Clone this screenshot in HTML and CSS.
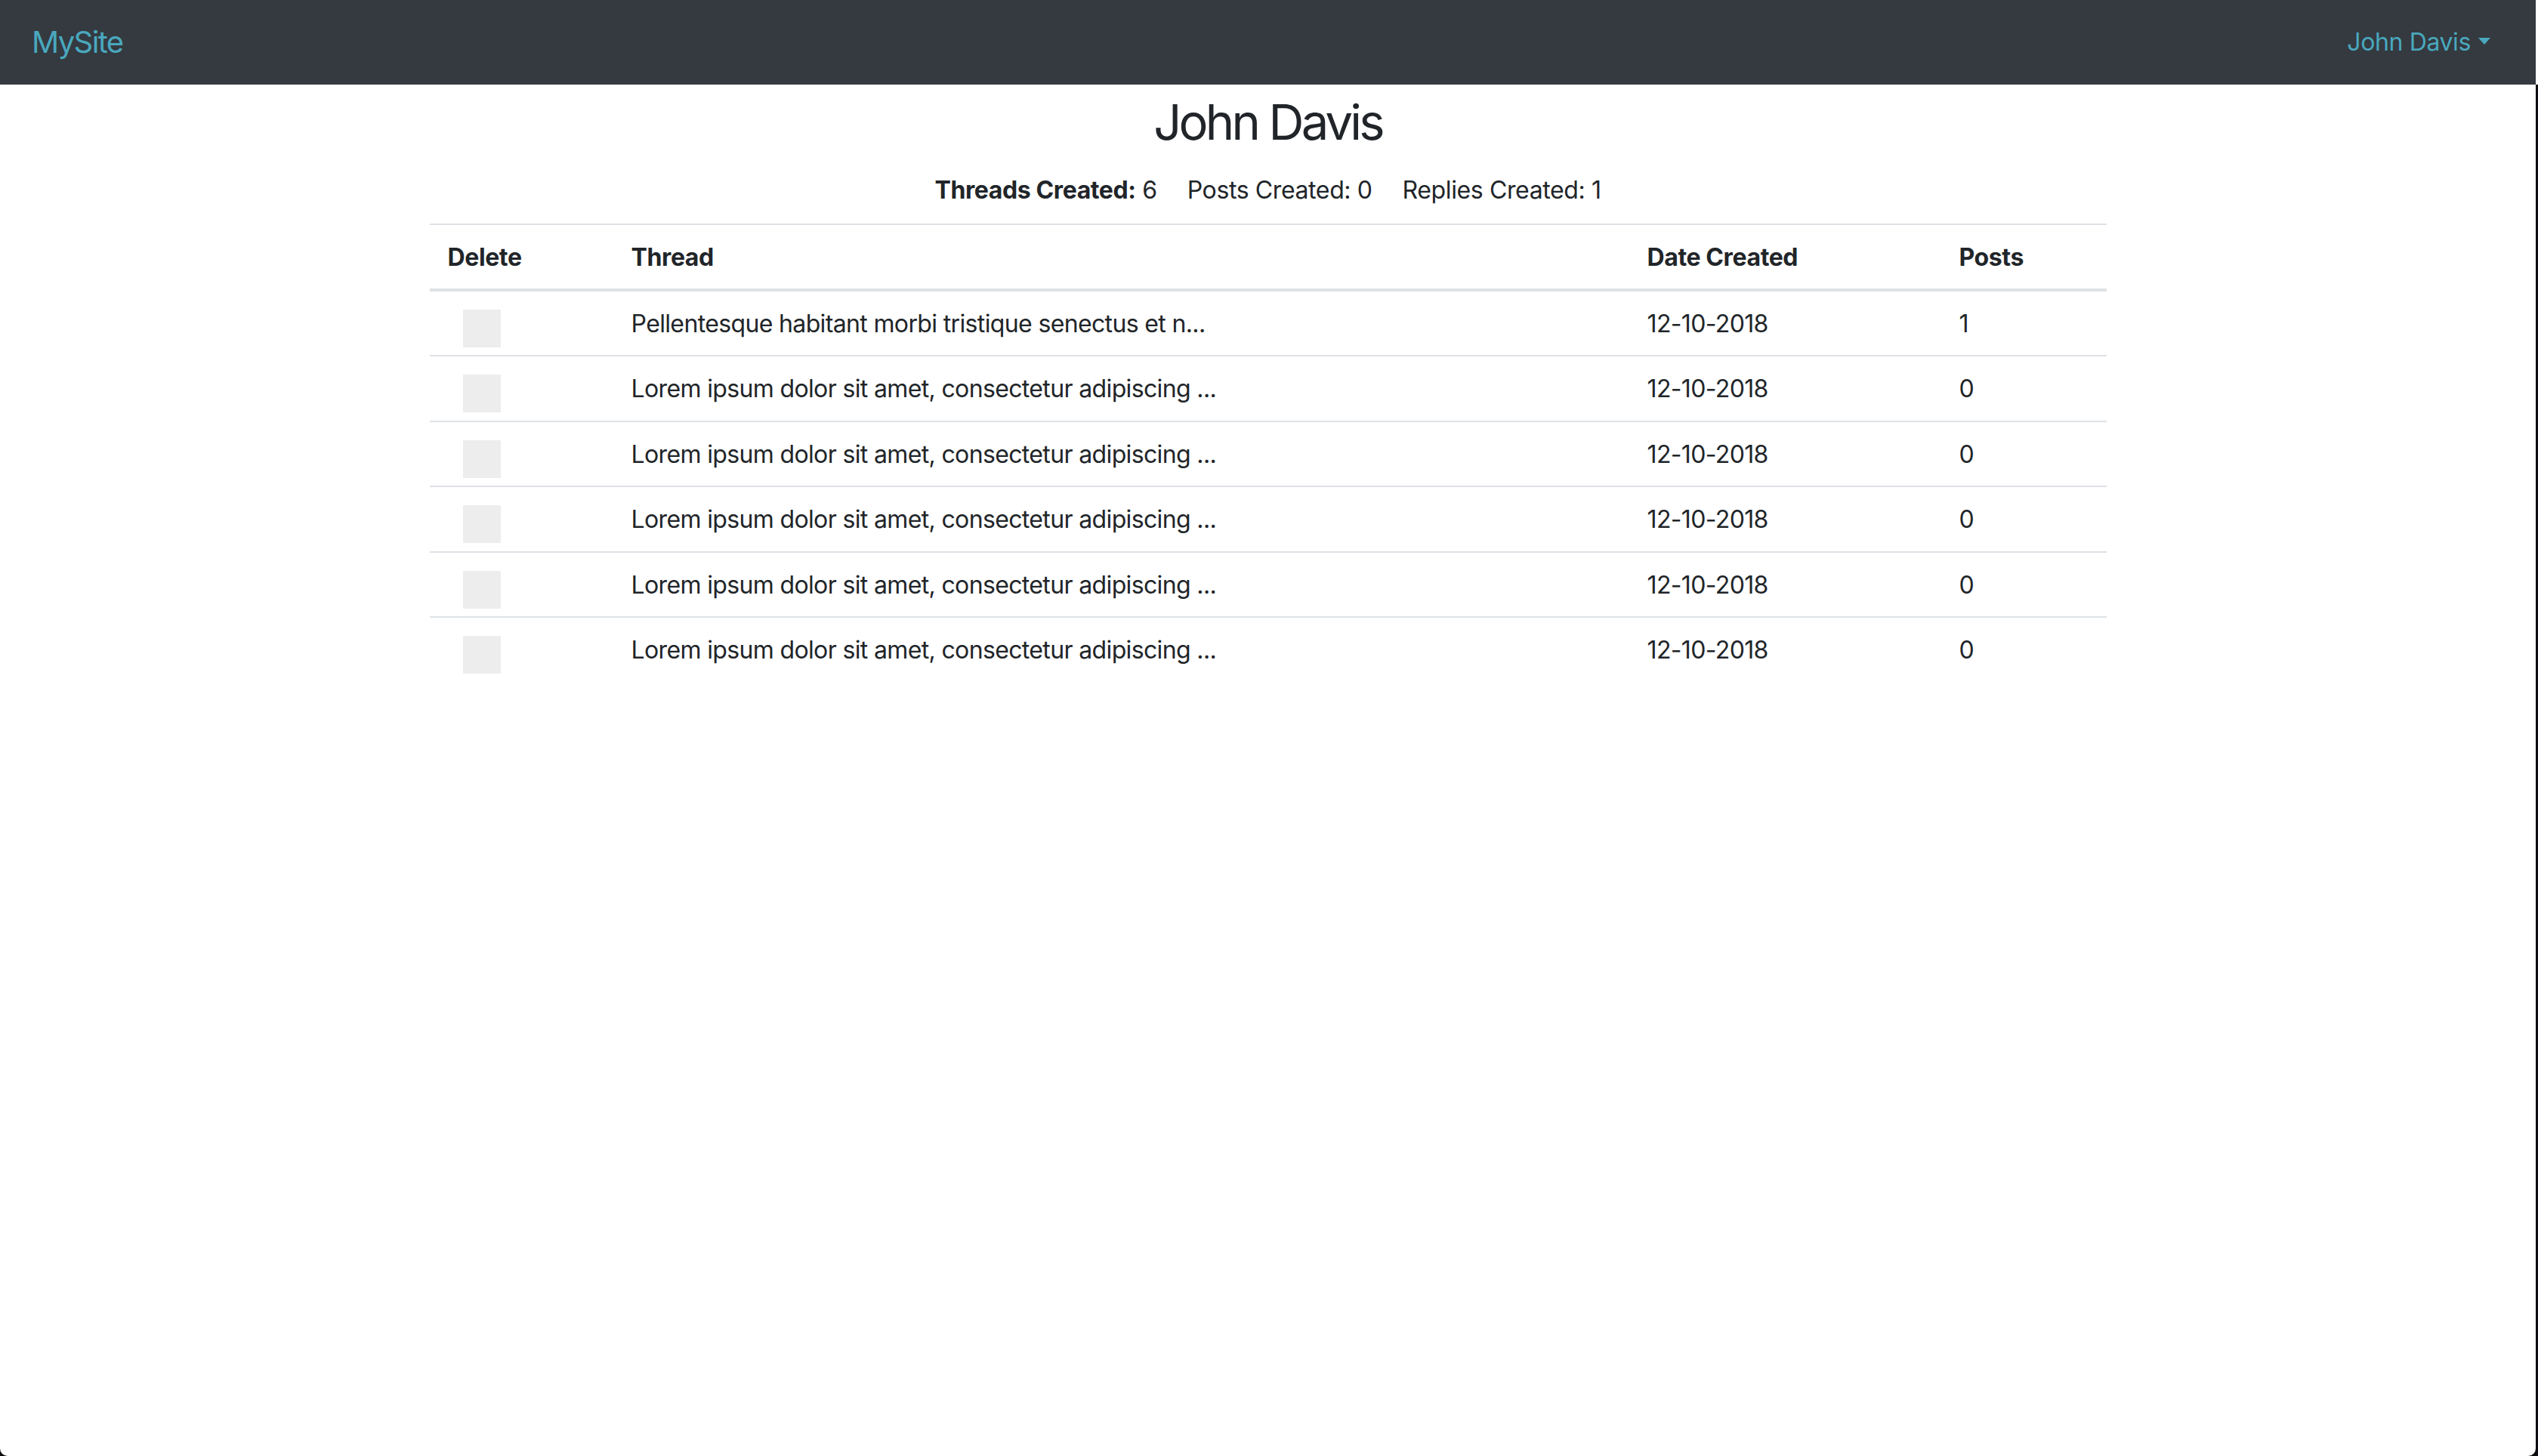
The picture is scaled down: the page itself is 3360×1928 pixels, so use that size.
FILE: index.html
```html
<!DOCTYPE html>
<html lang="en">
<head>
<meta charset="utf-8">
<title>John Davis - MySite</title>
<link rel="stylesheet" href="styles.css">
</head>
<body>
<div class="window">
  <nav class="navbar">
    <a class="brand" href="#">MySite</a>
    <a class="user-link" href="#">John Davis<span class="caret"></span></a>
  </nav>
  <main class="container">
    <h1 class="title">John Davis</h1>
    <div class="stats">
      <span><b>Threads Created:</b> 6</span>
      <span>Posts Created: 0</span>
      <span>Replies Created: 1</span>
    </div>
    <table class="threads">
      <colgroup>
        <col class="c-del"><col class="c-thread"><col class="c-date"><col class="c-posts">
      </colgroup>
      <thead>
        <tr><th>Delete</th><th>Thread</th><th>Date Created</th><th>Posts</th></tr>
      </thead>
      <tbody>
        <tr><td class="del"><span class="box"></span></td><td>Pellentesque habitant morbi tristique senectus et n...</td><td>12-10-2018</td><td>1</td></tr>
        <tr><td class="del"><span class="box"></span></td><td>Lorem ipsum dolor sit amet, consectetur adipiscing ...</td><td>12-10-2018</td><td>0</td></tr>
        <tr><td class="del"><span class="box"></span></td><td>Lorem ipsum dolor sit amet, consectetur adipiscing ...</td><td>12-10-2018</td><td>0</td></tr>
        <tr><td class="del"><span class="box"></span></td><td>Lorem ipsum dolor sit amet, consectetur adipiscing ...</td><td>12-10-2018</td><td>0</td></tr>
        <tr><td class="del"><span class="box"></span></td><td>Lorem ipsum dolor sit amet, consectetur adipiscing ...</td><td>12-10-2018</td><td>0</td></tr>
        <tr><td class="del"><span class="box"></span></td><td>Lorem ipsum dolor sit amet, consectetur adipiscing ...</td><td>12-10-2018</td><td>0</td></tr>
      </tbody>
    </table>
  </main>
</div>
</body>
</html>
```

FILE: styles.css
```css
html, body {
  margin: 0;
  padding: 0;
}
body {
  background: linear-gradient(#ffffff 0, #ffffff 112px, #0c0d10 112px) no-repeat;
  background-color: #0c0d10;
  font-family: Inter, "Liberation Sans", sans-serif;
  color: #212529;
  font-size: 32px;
  line-height: 48px;
  letter-spacing: -0.012em;
}
.window {
  width: 3357px;
  height: 1928px;
  background: #ffffff;
  border-radius: 0 0 10px 10px;
  overflow: hidden;
}
.navbar {
  height: 112px;
  background: #343a40;
  display: flex;
  align-items: center;
  justify-content: space-between;
  padding: 0 60px 0 42px;
  box-sizing: border-box;
}
.brand {
  color: #4aa8bf;
  font-size: 40px;
  line-height: 60px;
  letter-spacing: -0.04em;
  text-decoration: none;
}
.user-link {
  color: #4aa8bf;
  font-size: 32px;
  line-height: 48px;
  text-decoration: none;
  display: flex;
  align-items: center;
}
.caret {
  display: inline-block;
  width: 0;
  height: 0;
  margin-left: 10px;
  margin-top: -4px;
  border-top: 9px solid #4aa8bf;
  border-left: 8px solid transparent;
  border-right: 8px solid transparent;
}
.container {
  width: 2220px;
  margin: 0 auto;
}
.title {
  margin: 10px 0 0;
  font-size: 65px;
  line-height: 80px;
  font-weight: 400;
  text-align: center;
  letter-spacing: -0.058em;
}
.stats {
  margin-top: 26px;
  display: flex;
  justify-content: center;
  gap: 40px;
}
.stats b {
  font-weight: 700;
}
.threads {
  margin-top: 20px;
  width: 2220px;
  table-layout: fixed;
  border-collapse: collapse;
}
.c-del { width: 243px; }
.c-thread { width: 1345px; }
.c-date { width: 413px; }
.c-posts { width: 219px; }
.threads th,
.threads td {
  text-align: left;
  vertical-align: top;
  padding: 19px 24px 17.4px;
  border-top: 2px solid #dee2e6;
  white-space: nowrap;
}
.threads td {
  letter-spacing: -0.02em;
}
.threads th {
  font-weight: 700;
  padding-bottom: 17px;
  border-bottom: 4px solid #dee2e6;
}
.threads tbody tr:first-child td {
  border-top: none;
}
.threads td.del {
  padding: 24px 24px 10.4px 44px;
}
.box {
  display: block;
  width: 50px;
  height: 50px;
  background: #ededed;
}
```
